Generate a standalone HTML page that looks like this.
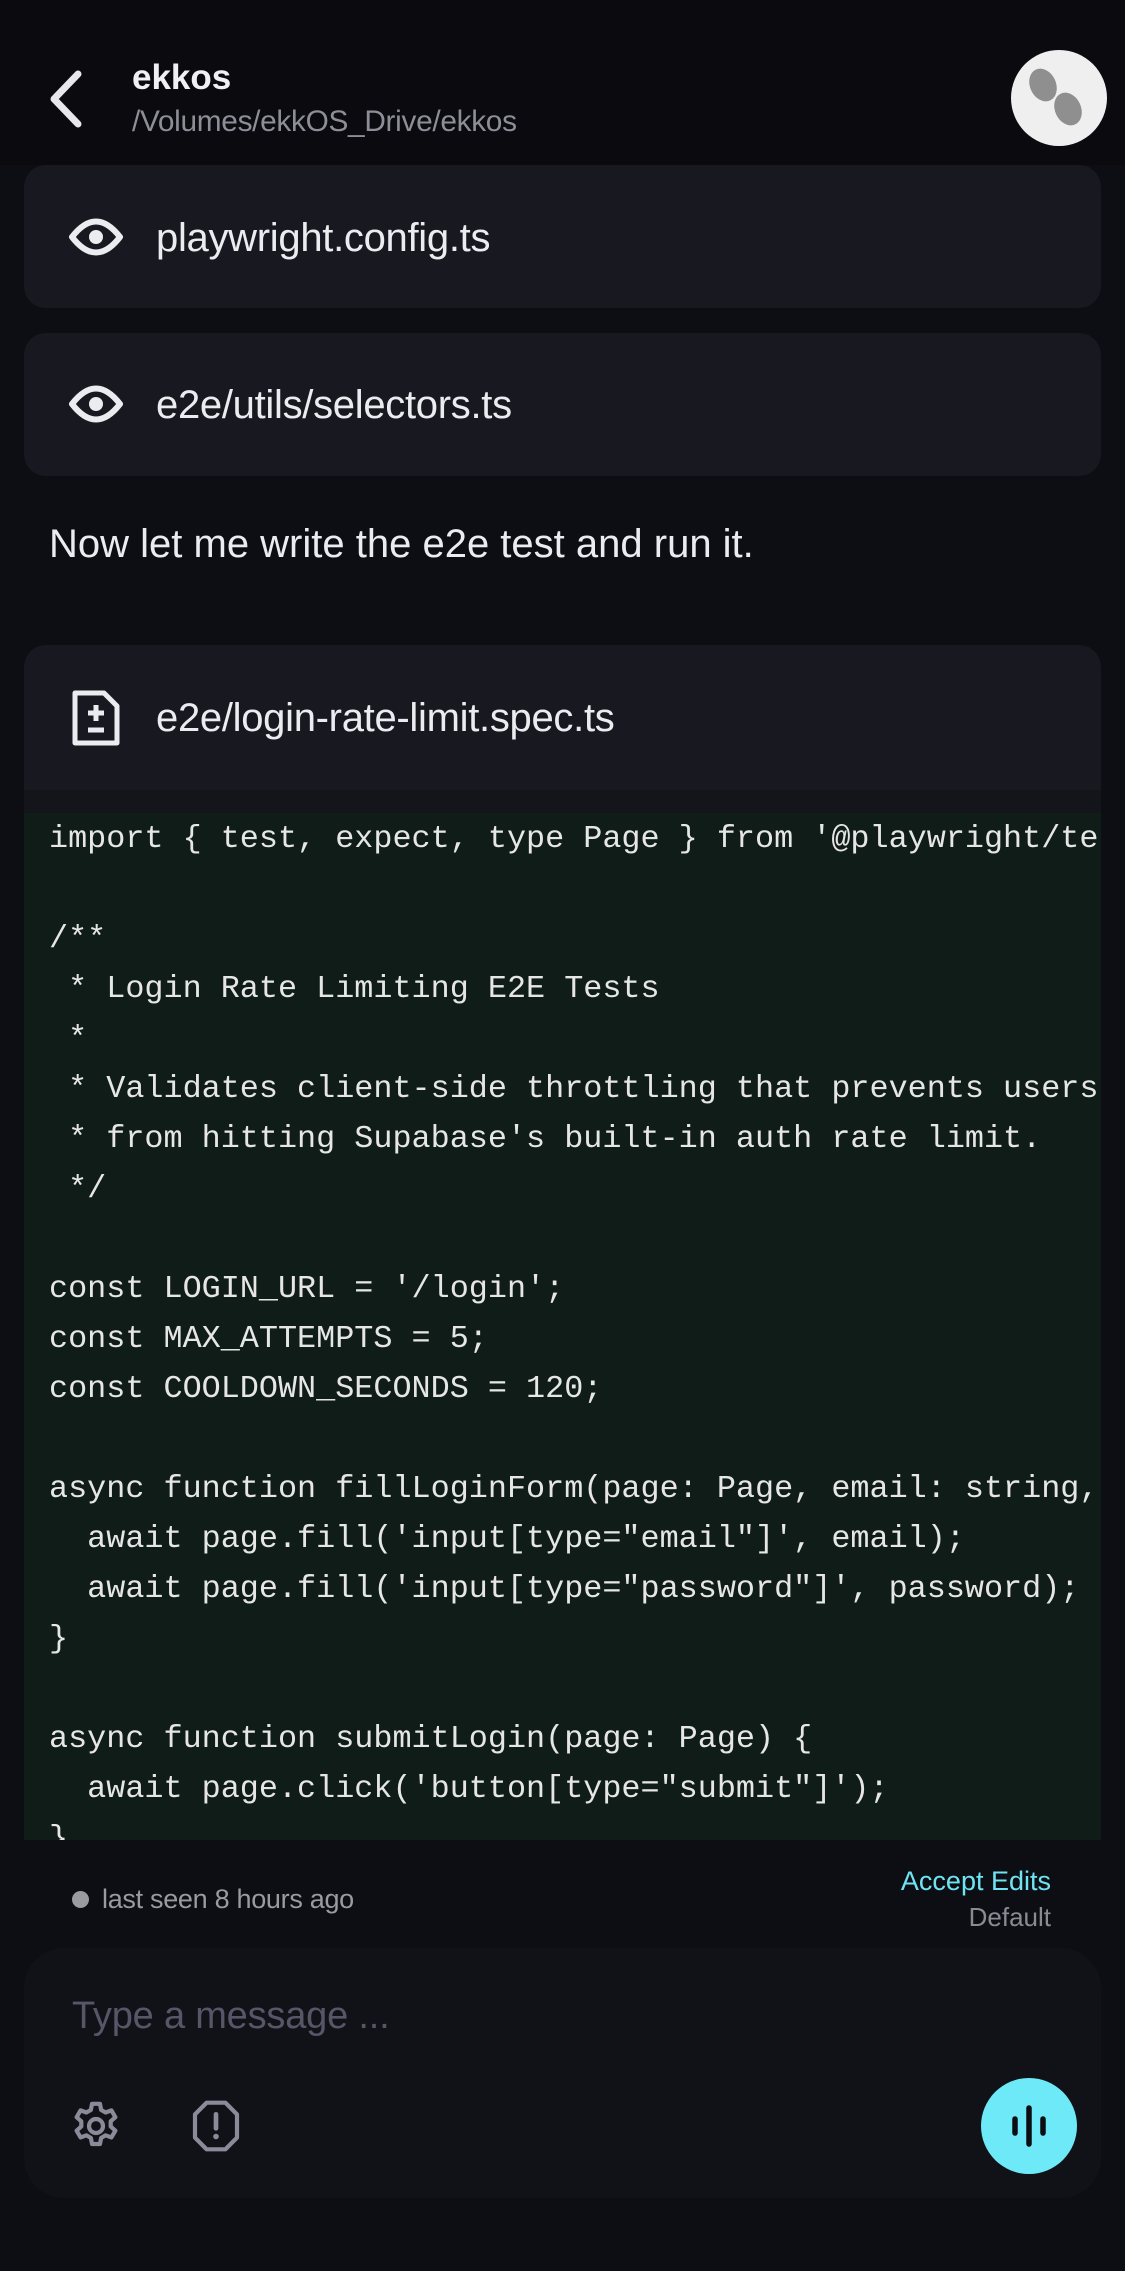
<!DOCTYPE html>
<html><head><meta charset="utf-8"><style>
*{margin:0;padding:0;box-sizing:border-box}
body{width:1125px;height:2271px;background:#0d0e13;font-family:"Liberation Sans",sans-serif;position:relative;overflow:hidden;color:#ececf0}
.hdr{position:absolute;left:0;top:0;width:1125px;height:165px;background:#0a0a0f}
.card{position:absolute;left:24px;width:1077px;background:#181820;border-radius:22px}
.ct{position:absolute;left:156px;font-size:40px;color:#ececf0;line-height:40px;letter-spacing:-0.3px}
.code{position:absolute;left:24px;top:813px;width:1077px;height:1027px;background:#101c17;overflow:hidden}
.ln{position:absolute;left:25px;font-family:"Liberation Mono",monospace;font-size:31.8px;color:#e6e6e6;white-space:pre;line-height:50px}
</style></head><body>
<div class="hdr">
<svg style="position:absolute;left:44px;top:68px" width="44" height="62" viewBox="0 0 44 62"><path d="M34 6 L10 31 L34 56" stroke="#e8e8ec" stroke-width="7" fill="none" stroke-linecap="round" stroke-linejoin="round"/></svg>
<div style="position:absolute;left:132px;top:58px;font-size:35px;font-weight:bold;color:#f0f0f4">ekkos</div>
<div style="position:absolute;left:132px;top:105px;font-size:29.8px;color:#8e8e98;letter-spacing:-0.3px">/Volumes/ekkOS_Drive/ekkos</div>
<div style="position:absolute;left:1011px;top:50px;width:96px;height:96px;border-radius:50%;background:#efefef"></div>
<div style="position:absolute;left:1030px;top:68px;width:26px;height:34px;border-radius:50%;background:#8f8f8f;transform:rotate(-25deg)"></div>
<div style="position:absolute;left:1055px;top:92px;width:26px;height:34px;border-radius:50%;background:#8f8f8f;transform:rotate(-25deg)"></div>
</div>

<div class="card" style="top:165px;height:143px"></div>
<svg style="position:absolute;left:68px;top:214px" width="56" height="46" viewBox="0 0 56 46"><path d="M4 23 Q28 -8 52 23 Q28 54 4 23 Z" stroke="#ececf0" stroke-width="6" fill="none" stroke-linejoin="round"/><circle cx="28" cy="23" r="7" fill="#ececf0"/></svg>
<div class="ct" style="top:218px">playwright.config.ts</div>

<div class="card" style="top:333px;height:143px"></div>
<svg style="position:absolute;left:68px;top:381px" width="56" height="46" viewBox="0 0 56 46"><path d="M4 23 Q28 -8 52 23 Q28 54 4 23 Z" stroke="#ececf0" stroke-width="6" fill="none" stroke-linejoin="round"/><circle cx="28" cy="23" r="7" fill="#ececf0"/></svg>
<div class="ct" style="top:385px">e2e/utils/selectors.ts</div>

<div style="position:absolute;left:49px;top:522px;font-size:40px;color:#ececf0;letter-spacing:0px">Now let me write the e2e test and run it.</div>

<div class="card" style="top:645px;height:195px;border-radius:22px 22px 0 0"></div>
<div style="position:absolute;left:24px;top:790px;width:1077px;height:23px;background:#14151b"></div>
<svg style="position:absolute;left:70px;top:688px" width="52" height="60" viewBox="0 0 52 60"><path d="M5 5 H34 L47 18 V55 H5 Z" stroke="#ececf0" stroke-width="5" fill="none" stroke-linejoin="round"/><path d="M26 17 V33 M18 25 H34 M18 42 H34" stroke="#ececf0" stroke-width="5"/></svg>
<div class="ct" style="top:698px">e2e/login-rate-limit.spec.ts</div>

<div class="code">
<div class="ln" style="top:1px">import { test, expect, type Page } from '@playwright/test';</div>
<div class="ln" style="top:101px">/**</div>
<div class="ln" style="top:151px"> * Login Rate Limiting E2E Tests</div>
<div class="ln" style="top:201px"> *</div>
<div class="ln" style="top:251px"> * Validates client-side throttling that prevents users</div>
<div class="ln" style="top:301px"> * from hitting Supabase's built-in auth rate limit.</div>
<div class="ln" style="top:351px"> */</div>
<div class="ln" style="top:451px">const LOGIN_URL = '/login';</div>
<div class="ln" style="top:501px">const MAX_ATTEMPTS = 5;</div>
<div class="ln" style="top:551px">const COOLDOWN_SECONDS = 120;</div>
<div class="ln" style="top:651px">async function fillLoginForm(page: Page, email: string, password: string) {</div>
<div class="ln" style="top:701px">  await page.fill('input[type="email"]', email);</div>
<div class="ln" style="top:751px">  await page.fill('input[type="password"]', password);</div>
<div class="ln" style="top:801px">}</div>
<div class="ln" style="top:901px">async function submitLogin(page: Page) {</div>
<div class="ln" style="top:951px">  await page.click('button[type="submit"]');</div>
<div class="ln" style="top:1001px">}</div>
</div>

<div style="position:absolute;left:72px;top:1891px;width:17px;height:17px;border-radius:50%;background:#9a9aa0"></div>
<div style="position:absolute;left:102px;top:1884px;font-size:27px;color:#9a9aa2;letter-spacing:-0.3px">last seen 8 hours ago</div>
<div style="position:absolute;right:74px;top:1866px;font-size:27px;color:#6ee4f2">Accept Edits</div>
<div style="position:absolute;right:74px;top:1902px;font-size:26px;color:#8a8a94">Default</div>

<div style="position:absolute;left:24px;top:1948px;width:1077px;height:250px;background:#111218;border-radius:40px"></div>
<div style="position:absolute;left:72px;top:1995px;font-size:38px;color:#565668;letter-spacing:-0.2px">Type a message ...</div>
<svg style="position:absolute;left:68px;top:2098px" width="56" height="56" viewBox="0 0 24 24"><path d="M10.3 2.5h3.4l.5 2.6 1.9 1.1 2.5-.9 1.7 2.9-2 1.8v2.2l2 1.8-1.7 2.9-2.5-.9-1.9 1.1-.5 2.6h-3.4l-.5-2.6-1.9-1.1-2.5.9-1.7-2.9 2-1.8v-2.2l-2-1.8 1.7-2.9 2.5.9 1.9-1.1z" stroke="#8a8a98" stroke-width="1.8" fill="none" stroke-linejoin="round"/><circle cx="12" cy="12" r="3" stroke="#8a8a98" stroke-width="1.8" fill="none"/></svg>
<svg style="position:absolute;left:188px;top:2098px" width="56" height="56" viewBox="0 0 24 24"><path d="M8 2h8l5 5v10l-5 5h-8l-5-5v-10z" stroke="#8a8a98" stroke-width="1.8" fill="none" stroke-linejoin="round"/><path d="M12 7v6" stroke="#8a8a98" stroke-width="2" stroke-linecap="round"/><circle cx="12" cy="16.5" r="1.2" fill="#8a8a98"/></svg>
<div style="position:absolute;left:981px;top:2078px;width:96px;height:96px;border-radius:50%;background:#6ee9f8"></div>
<svg style="position:absolute;left:1001px;top:2098px" width="56" height="56" viewBox="0 0 56 56"><path d="M14 21v14M28 10v36M42 21v14" stroke="#0d0e13" stroke-width="5.5" stroke-linecap="round"/></svg>
</body></html>
